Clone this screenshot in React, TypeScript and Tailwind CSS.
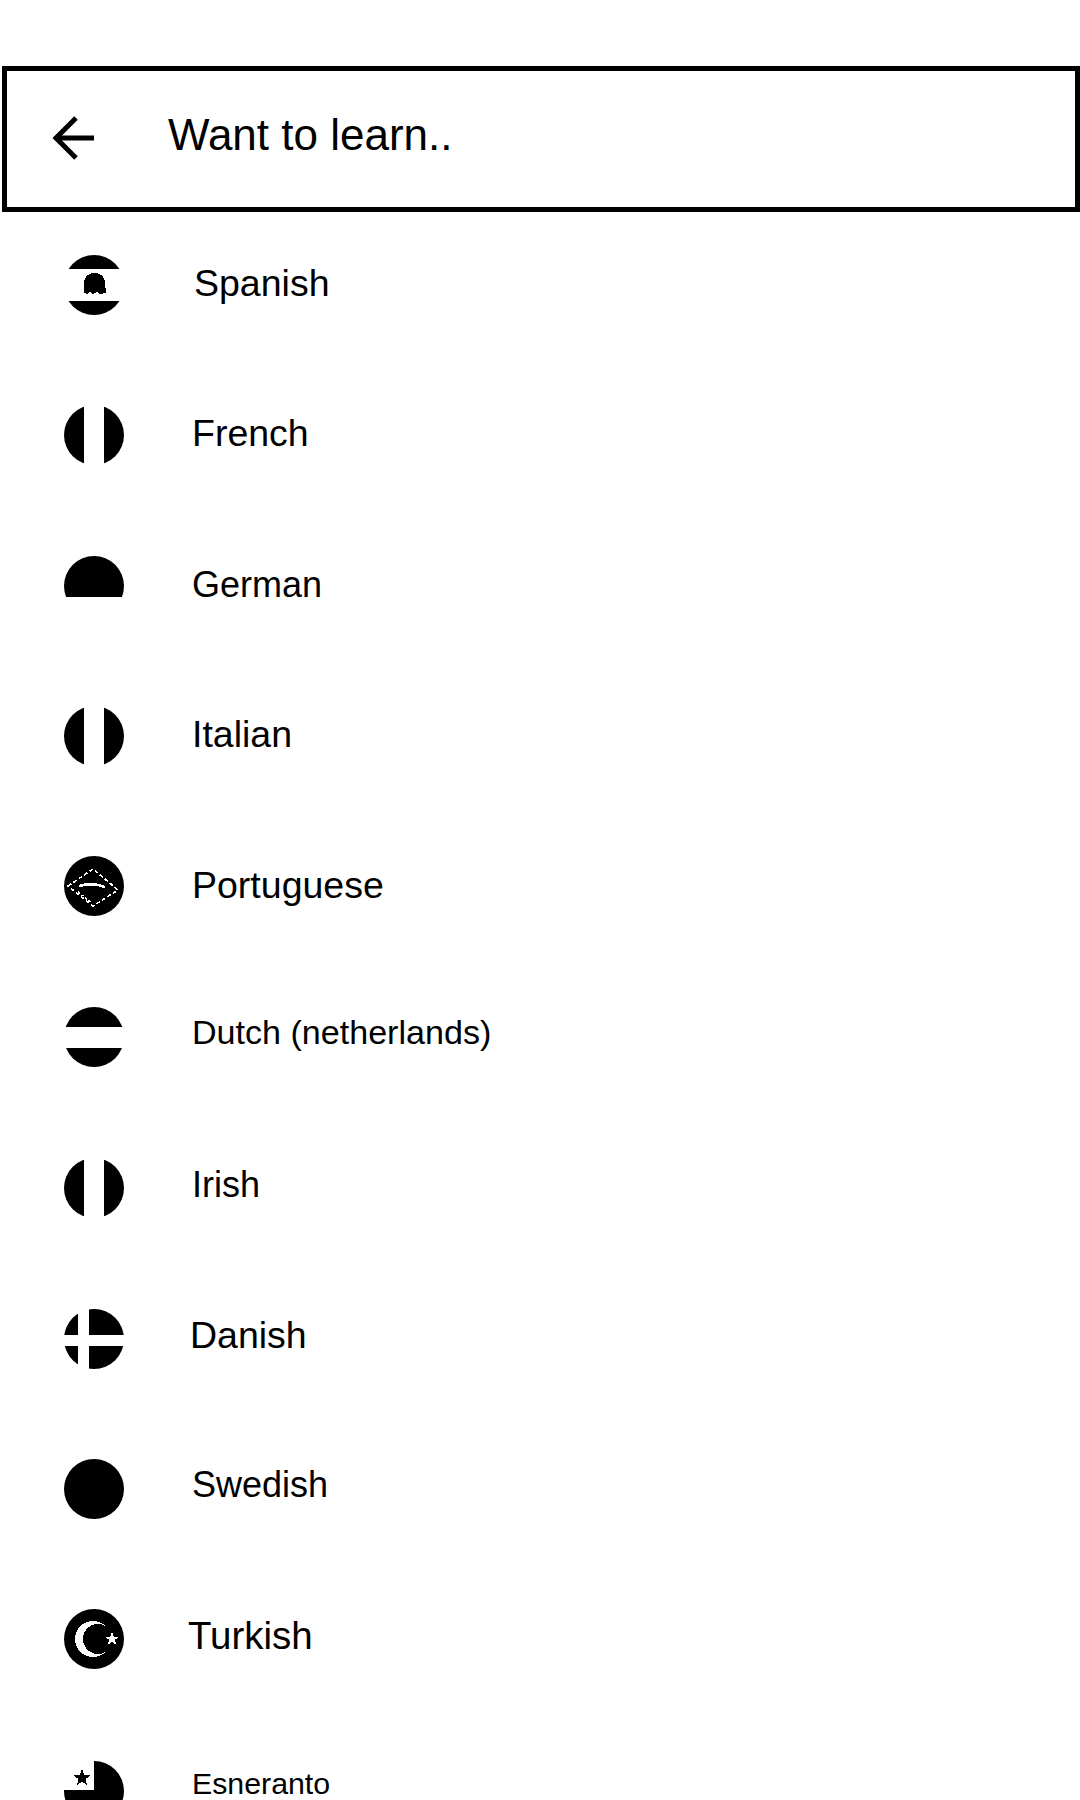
import React from "react";

const Clip = ({ id, children }: { id: string; children: React.ReactNode }) => (
  <svg width="60" height="60" viewBox="0 0 60 60" shapeRendering="crispEdges" className="block shrink-0 overflow-visible">
    <defs>
      <clipPath id={id}>
        <circle cx="30" cy="30" r="30" />
      </clipPath>
    </defs>
    <g clipPath={`url(#${id})`}>{children}</g>
  </svg>
);

const star = (cx: number, cy: number, R: number, r: number) => {
  const pts: string[] = [];
  for (let i = 0; i < 10; i++) {
    const a = -Math.PI / 2 + (i * Math.PI) / 5;
    const d = i % 2 === 0 ? R : r;
    pts.push(`${(cx + d * Math.cos(a)).toFixed(2)},${(cy + d * Math.sin(a)).toFixed(2)}`);
  }
  return pts.join(" ");
};

const Vertical = ({ id }: { id: string }) => (
  <Clip id={id}>
    <rect x="0" y="0" width="20" height="60" fill="#000" />
    <rect x="40" y="0" width="20" height="60" fill="#000" />
  </Clip>
);

const Spanish = () => (
  <Clip id="es">
    <rect x="0" y="0" width="60" height="14" fill="#000" />
    <rect x="0" y="46" width="60" height="14" fill="#000" />
    <path d="M20 38 L20 28 C20 21 25 18 30 18 C36 18 41 21 41 28 L42 38 L36 39 L33 37 L29 39 L26 37 L23 39 Z" fill="#000" />
  </Clip>
);

const German = () => (
  <Clip id="de">
    <rect x="0" y="0" width="60" height="41" fill="#000" />
  </Clip>
);

const Portuguese = () => (
  <Clip id="pt">
    <rect width="60" height="60" fill="#000" />
    <path d="M4 30 L29 13 L54 34 L29 50 Z" fill="none" stroke="#fff" strokeWidth="1.6" strokeDasharray="4 2.5" />
    <path d="M15 30 Q28 26 41 31" fill="none" stroke="#fff" strokeWidth="2.6" />
    <path d="M14 36 L28 47" fill="none" stroke="#fff" strokeWidth="1.4" strokeDasharray="2.5 2" />
  </Clip>
);

const Dutch = () => (
  <Clip id="nl">
    <rect width="60" height="20" fill="#000" />
    <rect y="41" width="60" height="19" fill="#000" />
  </Clip>
);

const Danish = () => (
  <Clip id="da">
    <rect x="0" y="0" width="14" height="26" fill="#000" />
    <rect x="25" y="0" width="35" height="26" fill="#000" />
    <rect x="0" y="37" width="14" height="23" fill="#000" />
    <rect x="25" y="37" width="35" height="23" fill="#000" />
  </Clip>
);

const Swedish = () => (
  <Clip id="sv">
    <rect width="60" height="60" fill="#000" />
  </Clip>
);

const Turkish = () => (
  <Clip id="tr">
    <rect width="60" height="60" fill="#000" />
    <circle cx="29" cy="30" r="18" fill="#fff" />
    <circle cx="34" cy="30" r="15" fill="#000" />
    <polygon points={star(48, 30, 7, 3)} fill="#fff" />
  </Clip>
);

const Esperanto = () => (
  <Clip id="eo">
    <rect x="30" y="0" width="30" height="60" fill="#000" />
    <rect x="0" y="29" width="30" height="31" fill="#000" />
    <polygon points={star(18, 17, 9, 3.6)} fill="#000" />
  </Clip>
);

const rows = [
  { name: "Spanish", flag: <Spanish />, row: "h-[149px]", text: "ml-[70px] text-[37.5px] -mt-[1px]" },
  { name: "French", flag: <Vertical id="fr" />, row: "h-[151px]", text: "ml-[68px] text-[37.5px] -mt-[2px]" },
  { name: "German", flag: <German />, row: "h-[151px]", text: "ml-[68px] text-[36px] -mt-[2px]" },
  { name: "Italian", flag: <Vertical id="it" />, row: "h-[149px]", text: "ml-[68px] text-[37.5px] -mt-[2px]" },
  { name: "Portuguese", flag: <Portuguese />, row: "h-[151px]", text: "ml-[68px] text-[37.5px] mt-[0px]" },
  { name: "Dutch (netherlands)", flag: <Dutch />, row: "h-[151px]", text: "ml-[68px] text-[34.1px] -mt-[8px]" },
  { name: "Irish", flag: <Vertical id="ie" />, row: "h-[151px]", text: "ml-[68px] text-[36px] -mt-[5px]" },
  { name: "Danish", flag: <Danish />, row: "h-[151px]", text: "ml-[66px] text-[37.5px] -mt-[6px]" },
  { name: "Swedish", flag: <Swedish />, row: "h-[149px]", text: "ml-[68px] text-[36px] -mt-[7px]" },
  { name: "Turkish", flag: <Turkish />, row: "h-[152px]", text: "ml-[64px] text-[38.5px] -mt-[6px]" },
  { name: "Esneranto", flag: <Esperanto />, row: "h-[151px]", text: "ml-[68px] text-[30.3px] -mt-[12px]" },
];

export default function App() {
  return (
    <div className="h-[1800px] w-[1080px] overflow-hidden bg-white font-['Liberation_Sans',Arial,sans-serif] text-black">
      <header className="ml-[2px] mt-[66px] flex h-[146px] items-center border-[5px] border-black">
        <svg width="46" height="46" viewBox="0 0 46 46" className="ml-[44px] -mt-[3px] shrink-0" fill="none" stroke="#000" strokeWidth="5">
          <path d="M43 23 H5" />
          <path d="M25 3 L5 23 L25 43" />
        </svg>
        <h1 className="ml-[71px] -mt-[8px] text-[44px] font-normal leading-none">Want to learn..</h1>
      </header>
      <ul className="-mt-[2px]">
        {rows.map((r) => (
          <li key={r.name} className={`flex items-center pl-[64px] ${r.row}`}>
            {r.flag}
            <span className={`leading-none ${r.text}`}>{r.name}</span>
          </li>
        ))}
      </ul>
    </div>
  );
}
